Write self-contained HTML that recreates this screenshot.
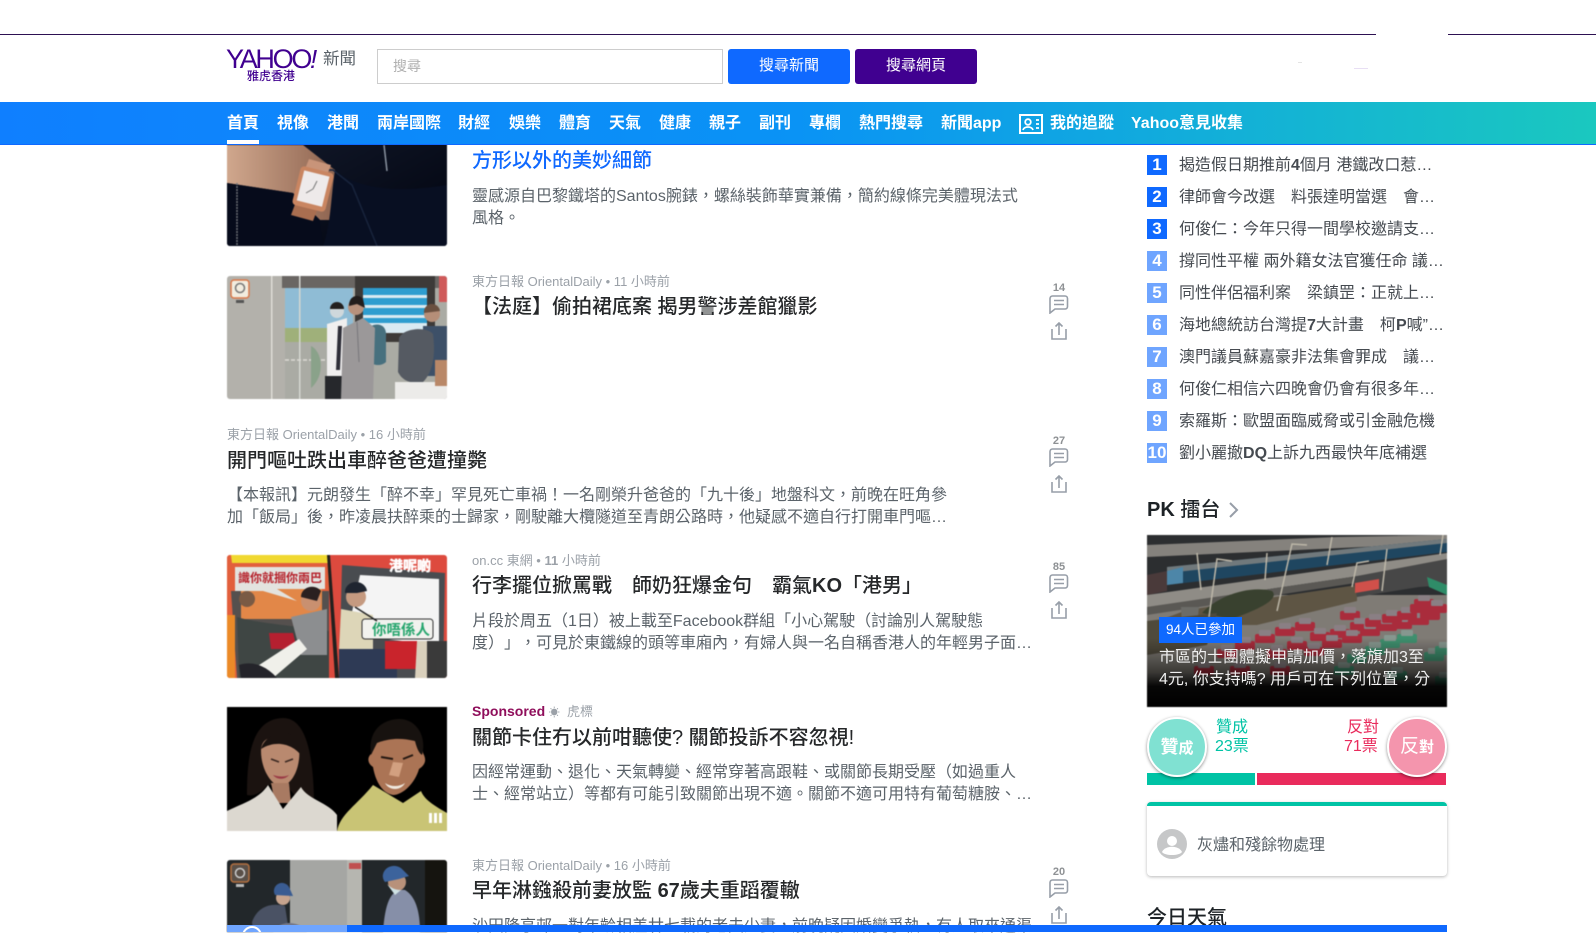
<!DOCTYPE html>
<html lang="zh-Hant"><head><meta charset="utf-8"><title>Yahoo 新聞</title>
<style>
html,body{margin:0;padding:0;background:#fff}
body{width:1596px;height:932px;position:relative;overflow:hidden;font-family:"Liberation Sans","Noto Sans CJK TC",sans-serif;color:#26282a;text-spacing-trim:space-all}
.a{position:absolute;white-space:nowrap}
.m{font-size:13px;line-height:18px;color:#9ba1a8}
.h{font-size:20px;line-height:28px;color:#26282a;font-weight:500}
.h b{font-weight:700}
.d{font-size:16px;line-height:22px;color:#5b636a;font-weight:400}
.n{position:absolute;top:110px;font-size:16px;line-height:28px;color:#fff;font-weight:700;white-space:nowrap}
.r{position:absolute;left:1147px;width:20px;height:20px;background:#6fa5ff;color:#fff;text-align:center;font-size:17px;line-height:20px;font-weight:700}
.r.t{background:#0f69ff}
.rt{position:absolute;left:1179px;font-size:16px;line-height:22px;color:#454a50;white-space:nowrap;font-weight:400}
.rt b{font-weight:700}
.c{position:absolute;width:24px;text-align:center;font-size:11px;font-weight:700;color:#8e9194;line-height:12px}
svg{position:absolute;display:block}
svg.im{filter:blur(.5px)}
</style></head><body>

<!-- story images -->
<svg class="im" style="left:227px;top:125px;border-radius:3px" width="220" height="121" viewBox="0 0 220 121">
<defs><linearGradient id="wg" x1="0" y1="0" x2="1" y2="1"><stop offset="0" stop-color="#151c2e"/><stop offset="1" stop-color="#01040f"/></linearGradient>
<linearGradient id="sk" x1="0" y1="0" x2="1" y2="0"><stop offset="0" stop-color="#d0a78d"/><stop offset="1" stop-color="#8e6450"/></linearGradient></defs>
<rect width="220" height="121" fill="url(#wg)"/>
<path d="M0 20H76L108 45L106 95H93L66 68L0 58Z" fill="url(#sk)"/>
<path d="M108 45C125 60 160 70 220 60V121H96C104 100 104 70 108 45Z" fill="#080f22"/>
<path d="M100 45H106L125 60L150 121" stroke="#18243c" stroke-width="1.500" fill="none"/>
<path d="M0 58L66 68L93 95L96 121H0Z" fill="#060b1b"/>
<path d="M10 58V121" stroke="#6f7379" stroke-width="1.500" stroke-dasharray="2 1"/>
<path d="M157 20L160 46" stroke="#8a93a0" stroke-width="1.500"/>
<path d="M82 34L104 40L96 60L74 54Z" fill="#c89479"/>
<path d="M70 74L92 80L86 96L64 90Z" fill="#a96e50"/>
<rect x="69" y="44" width="34" height="40" rx="4" fill="#c98561" transform="rotate(14 86 64)"/>
<rect x="73" y="48" width="26" height="31" fill="#eeeaea" transform="rotate(14 86 64)"/>
<path d="M86 64L90 56M86 64L79 68" stroke="#777" fill="none"/>
</svg>

<svg class="im" style="left:227px;top:276px;border-radius:3px" width="220" height="123" viewBox="0 0 220 123">
<rect width="220" height="123" fill="#b3b1ab"/>
<rect x="58" width="162" height="123" fill="#aaaba4"/>
<rect x="55" y="0" width="165" height="12" fill="#6a6663"/>
<rect x="128" y="0" width="80" height="66" fill="#3d3a38"/>
<rect x="58" y="12" width="68" height="40" fill="#8fbcd5"/>
<rect x="58" y="52" width="66" height="14" fill="#9fb07a"/>
<g fill="#2e9dcf"><rect x="136" y="12" width="64" height="7"/><rect x="136" y="22" width="64" height="7"/><rect x="136" y="32" width="64" height="7"/><rect x="136" y="42" width="64" height="5"/></g>
<g fill="#d9eaf2"><rect x="136" y="19" width="64" height="3"/><rect x="136" y="29" width="64" height="3"/><rect x="136" y="39" width="64" height="3"/><rect x="136" y="47" width="64" height="10"/></g>
<rect x="212" y="0" width="8" height="26" fill="#cf5a5a"/>
<rect x="44" y="0" width="1.500" height="123" fill="#dedcd6"/>
<rect x="72" y="0" width="1.500" height="123" fill="#d4d6d0"/>
<path d="M58 84H140" stroke="#dcdad4" stroke-dasharray="4 2" stroke-width="1.500"/>
<path d="M84 70C96 76 98 100 84 112Z" fill="#8aa28a"/>
<rect x="4" y="4" width="18" height="18" rx="3" fill="#f2ecdf" stroke="#d9784a" stroke-width="1.500"/>
<circle cx="13" cy="12" r="4.500" fill="none" stroke="#777" stroke-width="1.500"/>
<rect x="9" y="24" width="8" height="3" fill="#555"/>
<path d="M100 48L120 42V95L116 123H100Z" fill="#f0efef"/><path d="M111 50h4l-2 44h-4z" fill="#2e2e38"/>
<path d="M98 100H122V123H98Z" fill="#26282c"/>
<circle cx="110" cy="35" r="7" fill="#cfd8dc"/><path d="M103 33a7 7 0 0 1 14 0z" fill="#23201f"/>
<path d="M144 50C152 46 160 50 159 60V86C152 92 144 88 140 84Z" fill="#47707e"/>
<path d="M116 52L136 42L148 52L146 123H114Z" fill="#9b9899"/>
<path d="M130 46l2 40" stroke="#77767a"/>
<circle cx="129" cy="31" r="8" fill="#b7917c"/><path d="M122 30a8 9 0 0 1 14-7l2 9-8-4z" fill="#221d1c"/>
<circle cx="205" cy="38" r="8" fill="#b58e78"/><path d="M197 37a8 8 0 0 1 16-2z" fill="#6a5040"/>
<rect x="196" y="50" width="24" height="50" fill="#3d5068"/>
<path d="M172 62C176 52 200 50 206 58C208 74 208 94 196 106C186 108 176 106 171 96Z" fill="#555a62"/>
<path d="M168 106H220V123H168Z" fill="#ecebe9"/>
<rect x="208" y="84" width="12" height="26" fill="#b98868"/>
</svg>

<svg class="im" style="left:227px;top:555px;border-radius:3px" width="220" height="123" viewBox="0 0 220 123">
<rect width="220" height="123" fill="#dd4a3e"/>
<rect x="0" width="102" height="123" fill="#e25f3c"/>
<path d="M4 0H103L102 8H5Z" fill="#f0d830"/>
<path d="M4 36H102V123H10Z" fill="#55504e"/>
<path d="M14 34H95V64H14Z" fill="#e28748"/>
<path d="M8 12H98V34H50L70 46L36 36H8Z" fill="#e3e3df"/>
<text x="11" y="27" font-size="12" font-weight="700" fill="#b6232c" style="font-family:'Noto Sans CJK TC',sans-serif">識你就摑你兩巴</text>
<path d="M10 62C30 68 60 70 102 76V123H12Z" fill="#3f4644"/>
<circle cx="84" cy="46" r="10" fill="#c99070"/><path d="M74 42a11 10 0 0 1 20-6L90 46Z" fill="#2a2020"/>
<path d="M64 62L100 54V100H74Z" fill="#8c8e90"/>
<path d="M42 78H66L70 94H44Z" fill="#b52030"/>
<circle cx="20" cy="44" r="8" fill="#7a5a44"/>
<path d="M26 114L72 84L80 94L46 123Z" fill="#f0f0ea"/>
<path d="M12 110C30 104 44 116 50 123H14Z" fill="#24242a"/>
<rect x="0" y="60" width="8" height="63" fill="#eb8a28"/>
<path d="M100 0H103L112 123H108Z" fill="#23201e"/>
<path d="M115 10L218 18L216 123H112Z" fill="#494c50"/>
<path d="M133 20L212 24V90L120 80Z" fill="#f4f4f4"/>
<circle cx="129" cy="42" r="10" fill="#c59a80"/><path d="M118 38a11 10 0 0 1 22-2L130 38Z" fill="#1f2530"/>
<path d="M114 54L146 60V96H112Z" fill="#ddd6b8"/>
<rect x="135" y="64" width="71" height="20" rx="3" fill="#f2f2ee" stroke="#333"/>
<text x="145" y="80" font-size="14.500" font-weight="700" fill="#27a66e" style="font-family:'Noto Sans CJK TC',sans-serif">你唔係人</text>
<path d="M128 52L150 66" stroke="#222" stroke-width="1.500"/>
<path d="M112 94H170V123H112Z" fill="#2e3a55"/>
<rect x="158" y="86" width="38" height="28" fill="#c9242c"/>
<path d="M190 86H200L204 123H188Z" fill="#d9d0bc"/>
<rect x="200" y="86" width="20" height="37" fill="#3a3a3a"/>
<text x="162" y="16" font-size="14" font-weight="900" fill="#fff" stroke="#fff" stroke-width=".3" style="font-family:'Noto Sans CJK TC',sans-serif">港呢啲</text>
</svg>

<svg class="im" style="left:227px;top:707px;" width="220" height="124" viewBox="0 0 220 124">
<rect width="220" height="124" fill="#000"/>
<path d="M20 88C20 50 24 12 56 11C80 11 86 50 87 92C76 98 66 88 60 78H40C36 84 28 90 20 88Z" fill="#1b1310"/>
<path d="M34 44C34 28 50 26 72 40C74 56 68 76 54 80C44 78 34 62 34 44Z" fill="#b9896f"/>
<path d="M34 42C38 28 52 26 60 26C70 30 74 36 74 48C66 38 50 32 34 42Z" fill="#1b1310"/>
<path d="M44 52L52 55M58 55L66 52" stroke="#3a2822" stroke-width="1.500"/>
<path d="M46 68C52 70 58 70 62 68C58 73 50 73 46 68Z" fill="#9a3b46"/>
<path d="M44 76L62 76L64 96L48 96Z" fill="#a87a62"/>
<path d="M0 125V104C16 96 32 92 41 78L56 102L74 80C80 92 102 96 110 108V125Z" fill="#dcd8d0"/>
<path d="M110 125C112 108 130 98 146 78L176 96L194 84C198 94 210 100 220 106V125Z" fill="#c9c475"/>
<path d="M145 46C145 24 194 24 196 46C198 50 201 56 192 62C188 76 176 88 166 88C154 86 148 72 146 60C140 56 140 50 145 46Z" fill="#ab7455"/>
<path d="M144 48C140 18 162 12 172 12C190 12 200 30 195 48C192 46 190 42 188 34C172 30 160 32 150 36Z" fill="#17120f"/>
<path d="M154 50L166 52M176 52L186 48" stroke="#241812" stroke-width="2"/>
<path d="M158 76C164 80 172 80 178 76C174 84 162 84 158 76Z" fill="#efe8de"/>
<path d="M166 55L162 68L172 70L176 56Z" fill="#d2a080"/>
<g fill="#fff"><rect x="202" y="106" width="3" height="10"/><rect x="207" y="106" width="3" height="10"/><rect x="212" y="106" width="3" height="10"/></g>
</svg>

<svg class="im" style="left:227px;top:860px;border-radius:3px 3px 0 0" width="220" height="72" viewBox="0 0 220 72">
<rect width="220" height="72" fill="#22272a"/>
<rect x="63" width="57" height="72" fill="#a5a6a3"/>
<rect x="120" width="15" height="72" fill="#b6b6b0"/>
<rect x="122" y="3" width="12" height="6" fill="#c05050"/>
<rect x="4" y="4" width="18" height="18" rx="3" fill="#5a5048" stroke="#b37040" stroke-width="1.500"/>
<circle cx="13" cy="13" r="4.500" fill="none" stroke="#ccc" stroke-width="1.500"/>
<rect x="9" y="24" width="8" height="3" fill="#bbb"/>
<circle cx="56" cy="38" r="7" fill="#c7a48e"/><path d="M48 35a8 8 0 0 1 14-8l4 9Z" fill="#3a5c92"/>
<path d="M25 62C30 48 42 42 58 46L62 72H26Z" fill="#4a5264"/>
<path d="M46 72C52 60 72 60 80 72Z" fill="#74788a"/>
<path d="M156 72C158 42 164 28 178 30C188 36 193 50 193 72Z" fill="#868fa8"/>
<circle cx="170" cy="22" r="9" fill="#b8917a"/><path d="M158 22a10 9 0 0 1 18-12l6 6-10 3Z" fill="#3c639c"/>
<path d="M160 24C164 28 168 30 174 30L168 35Z" fill="#cfe2e4"/>
<rect x="198" y="0" width="22" height="72" fill="#15140f"/>
</svg>

<!-- main column text -->
<div class="a h" style="left:472px;top:147px;color:#0f69ff">方形以外的美妙細節</div>
<div class="a d" style="left:472px;top:186px">靈感源自巴黎鐵塔的Santos腕錶，螺絲裝飾華實兼備，簡約線條完美體現法式</div>
<div class="a d" style="left:472px;top:208px">風格。</div>

<div class="a m" style="left:472px;top:273px">東方日報 OrientalDaily • 11 小時前</div>
<div class="a h" style="left:472px;top:293px">【法庭】偷拍裙底案 揭男警涉差館獵影</div>

<div class="a m" style="left:227px;top:426px">東方日報 OrientalDaily • 16 小時前</div>
<div class="a h" style="left:227px;top:447px">開門嘔吐跌出車醉爸爸遭撞斃</div>
<div class="a d" style="left:227px;top:485px">【本報訊】元朗發生「醉不幸」罕見死亡車禍！一名剛榮升爸爸的「九十後」地盤科文，前晚在旺角參</div>
<div class="a d" style="left:227px;top:507px">加「飯局」後，昨凌晨扶醉乘的士歸家，剛駛離大欖隧道至青朗公路時，他疑感不適自行打開車門嘔…</div>

<div class="a m" style="left:472px;top:552px">on.cc 東網 • <b>11</b> 小時前</div>
<div class="a h" style="left:472px;top:572px">行李擺位掀罵戰　師奶狂爆金句　霸氣<b>KO</b>「港男」</div>
<div class="a d" style="left:472px;top:611px">片段於周五（1日）被上載至Facebook群組「小心駕駛（討論別人駕駛態</div>
<div class="a d" style="left:472px;top:633px">度）」，可見於東鐵線的頭等車廂內，有婦人與一名自稱香港人的年輕男子面…</div>

<div class="a m" style="left:472px;top:702px"><b style="color:#8f0e5b;font-size:14px">Sponsored</b> <span style="font-size:11px">☀</span> &nbsp;虎標</div>
<div class="a h" style="left:472px;top:724px">關節卡住冇以前咁聽使? 關節投訴不容忽視!</div>
<div class="a d" style="left:472px;top:762px">因經常運動、退化、天氣轉變、經常穿著高跟鞋、或關節長期受壓（如過重人</div>
<div class="a d" style="left:472px;top:784px">士、經常站立）等都有可能引致關節出現不適。關節不適可用特有葡萄糖胺、…</div>

<div class="a m" style="left:472px;top:857px">東方日報 OrientalDaily • 16 小時前</div>
<div class="a h" style="left:472px;top:877px">早年淋鏹殺前妻放監 <b>67</b>歲夫重蹈覆轍</div>
<div class="a d" style="left:472px;top:916px">沙田隆亨邨一對年齡相差廿七載的老夫少妻，前晚疑因婚變爭執，有人取來通渠</div>

<!-- comment / share icons -->
<svg width="0" height="0" style="position:absolute"><defs>
<g id="ci" fill="none" stroke="#979ea8" stroke-width="1.600"><path d="M3.500 1H16a2.500 2.500 0 0 1 2.500 2.500v8a2.500 2.500 0 0 1-2.500 2.500H6L1 18V3.500A2.500 2.500 0 0 1 3.500 1Z"/><path d="M5 5.500H15M5 9.500H15"/></g>
<g id="si" fill="none" stroke="#979ea8" stroke-width="1.600"><path d="M1 7V17H15V7"/><path d="M8 13V1M4.500 4.500L8 1l3.500 3.500"/></g>
</defs></svg>
<div class="c" style="left:1047px;top:282px">14</div>
<svg style="left:1049px;top:295px" width="20" height="19"><use href="#ci"/></svg>
<svg style="left:1051px;top:322px" width="16" height="18"><use href="#si"/></svg>
<div class="c" style="left:1047px;top:435px">27</div>
<svg style="left:1049px;top:448px" width="20" height="19"><use href="#ci"/></svg>
<svg style="left:1051px;top:475px" width="16" height="18"><use href="#si"/></svg>
<div class="c" style="left:1047px;top:561px">85</div>
<svg style="left:1049px;top:574px" width="20" height="19"><use href="#ci"/></svg>
<svg style="left:1051px;top:601px" width="16" height="18"><use href="#si"/></svg>
<div class="c" style="left:1047px;top:866px">20</div>
<svg style="left:1049px;top:879px" width="20" height="19"><use href="#ci"/></svg>
<svg style="left:1051px;top:906px" width="16" height="18"><use href="#si"/></svg>

<!-- right rail list -->
<div class="r t" style="top:155px">1</div><div class="rt" style="top:155px">揭造假日期推前<b>4</b>個月 港鐵改口惹…</div>
<div class="r t" style="top:187px">2</div><div class="rt" style="top:187px">律師會今改選　料張達明當選　會…</div>
<div class="r t" style="top:219px">3</div><div class="rt" style="top:219px">何俊仁：今年只得一間學校邀請支…</div>
<div class="r" style="top:251px">4</div><div class="rt" style="top:251px">撐同性平權 兩外籍女法官獲任命 議…</div>
<div class="r" style="top:283px">5</div><div class="rt" style="top:283px">同性伴侶福利案　梁鎮罡：正就上…</div>
<div class="r" style="top:315px">6</div><div class="rt" style="top:315px">海地總統訪台灣提<b>7</b>大計畫　柯<b>P</b>喊”…</div>
<div class="r" style="top:347px">7</div><div class="rt" style="top:347px">澳門議員蘇嘉豪非法集會罪成　議…</div>
<div class="r" style="top:379px">8</div><div class="rt" style="top:379px">何俊仁相信六四晚會仍會有很多年…</div>
<div class="r" style="top:411px">9</div><div class="rt" style="top:411px">索羅斯：歐盟面臨威脅或引金融危機</div>
<div class="r" style="top:443px">10</div><div class="rt" style="top:443px">劉小麗撤<b>DQ</b>上訴九西最快年底補選</div>

<div class="a" style="left:1147px;top:495px;font-size:20px;line-height:30px;color:#1d2226;font-weight:500"><b>PK</b> 擂台</div>
<svg style="left:1228px;top:501px" width="12" height="18"><path d="M2 2L9 9L2 16" fill="none" stroke="#979ea8" stroke-width="2"/></svg>

<!-- PK image -->
<svg class="im" style="left:1147px;top:535px" width="300" height="172" viewBox="0 0 300 172">
<defs><linearGradient id="pg" x1="0" y1="0" x2="0" y2="1"><stop offset=".6" stop-color="#000" stop-opacity="0"/><stop offset=".8" stop-color="#000" stop-opacity=".55"/><stop offset=".88" stop-color="#000" stop-opacity=".95"/><stop offset="1" stop-color="#000"/></linearGradient>
<g id="tr"><rect x="0" y="4" width="20" height="9" rx="2" fill="#a92c3c"/><rect x="4" y="0" width="12" height="6" rx="1" fill="#8a7f84"/></g>
<g id="tg"><rect x="0" y="4" width="20" height="9" rx="2" fill="#3f8f6e"/><rect x="4" y="0" width="12" height="6" rx="1" fill="#86978f"/></g></defs>
<rect width="300" height="172" fill="#7f7b75"/>
<rect width="300" height="60" fill="#2c2e30"/>
<path d="M0 10L190 2L300 0V8L0 22Z" fill="#85827d"/>
<path d="M0 40L20 36V56L0 60Z" fill="#4a3a3a"/>
<path d="M20 32L300 4V17L20 50Z" fill="#1f4660"/><path d="M20 32L300 4V8L20 38Z" fill="#71797c"/>
<path d="M20 36L36 32V48L20 50Z" fill="#4d86a8"/>
<path d="M0 60L300 18V28L0 72Z" fill="#8f8c86"/>
<path d="M0 72L300 28V34L0 80Z" fill="#5a5854"/>
<path d="M40 75L210 50V66L110 90H0Z" fill="#5e5544"/>
<path d="M55 78C70 62 100 50 125 56C135 66 100 78 85 84Z" fill="#39412f"/>
<path d="M34 72H52L48 110H36Z" fill="#6c6c68"/>
<path d="M0 86L70 78L60 110L0 120Z" fill="#4f4a3c"/>
<path d="M205 42L300 24V50L272 52L210 62Z" fill="#474747"/>
<path d="M208 48L232 44V54L208 58Z" fill="#d0504a"/>
<path d="M280 42L300 50V60L282 52Z" fill="#2f8c68"/>
<g stroke="#bdb7a8" stroke-width="1.500" fill="none"><path d="M62 82L70 24L85 26M130 76L145 9L160 10M180 30L185 2M205 52L210 28L222 26M235 56L240 14M50 18L54 55M120 18L118 45M293 20L296 0"/></g>
<use href="#tr" x="193" y="72"/><use href="#tr" x="148" y="83"/><use href="#tr" x="128" y="88"/><use href="#tr" x="108" y="95"/><use href="#tr" x="88" y="102"/><use href="#tr" x="140" y="102"/><use href="#tr" x="163" y="93"/><use href="#tr" x="183" y="90"/><use href="#tr" x="203" y="83"/><use href="#tr" x="213" y="88"/><use href="#tr" x="218" y="79"/><use href="#tr" x="230" y="83"/><use href="#tr" x="245" y="81"/><use href="#tr" x="262" y="77"/><use href="#tr" x="235" y="75"/><use href="#tr" x="250" y="72"/><use href="#tr" x="273" y="72"/><use href="#tr" x="263" y="65"/><use href="#tr" x="267" y="60"/><use href="#tr" x="280" y="65"/><use href="#tr" x="175" y="100"/><use href="#tr" x="195" y="95"/>
<use href="#tr" x="70" y="110"/><use href="#tr" x="120" y="110"/><use href="#tr" x="157" y="108"/><use href="#tr" x="47" y="127"/><use href="#tr" x="83" y="127"/><use href="#tr" x="123" y="127"/>
<use href="#tg" x="250" y="95"/><use href="#tg" x="233" y="100"/><use href="#tg" x="218" y="107"/><use href="#tg" x="277" y="113"/><use href="#tg" x="288" y="107"/><use href="#tg" x="240" y="132"/><use href="#tg" x="288" y="137"/><use href="#tg" x="187" y="127"/><use href="#tg" x="200" y="115"/>
<rect width="300" height="172" fill="url(#pg)"/>
</svg>
<div class="a" style="left:1159px;top:617px;width:83px;height:26px;background:#0f69ff;color:#fff;font-size:13.500px;line-height:26px;text-align:center">94人已參加</div>
<div class="a" style="left:1159px;top:647px;font-size:16px;line-height:22px;color:#f0f0f0">市區的士團體擬申請加價，落旗加3至</div>
<div class="a" style="left:1159px;top:669px;font-size:16px;line-height:22px;color:#f0f0f0">4元, 你支持嗎? 用戶可在下列位置，分</div>

<!-- votes -->
<div class="a" style="left:1147px;top:773px;width:108px;height:12px;background:#00c3a5"></div>
<div class="a" style="left:1257px;top:773px;width:189px;height:12px;background:#e92b5c"></div>
<div class="a" style="left:1147px;top:717px;width:56px;height:56px;border:2px solid #fff;border-radius:50%;background:#80e1d2;box-shadow:0 1px 3px rgba(0,0,0,.45);color:#fff;text-align:center;line-height:56px;font-size:15px;font-weight:700;z-index:2"><span style="font-size:18px">贊</span>成</div>
<div class="a" style="left:1387px;top:717px;width:56px;height:56px;border:2px solid #fff;border-radius:50%;background:#f495ad;box-shadow:0 1px 3px rgba(0,0,0,.45);color:#fff;text-align:center;line-height:56px;font-size:15px;font-weight:700;z-index:2"><span style="font-size:19px;font-weight:400">反</span>對</div>
<div class="a" style="left:1216px;top:718px;font-size:16px;line-height:20px;color:#00c3a5;font-weight:400">贊成</div>
<div class="a" style="left:1215px;top:737px;font-size:16px;line-height:20px;color:#00c3a5;font-weight:400">23票</div>
<div class="a" style="left:1347px;top:718px;font-size:16px;line-height:20px;color:#e92b5c;font-weight:400">反對</div>
<div class="a" style="left:1344px;top:737px;font-size:16px;line-height:20px;color:#e92b5c;font-weight:400">71票</div>

<!-- comment card -->
<div class="a" style="left:1147px;top:802px;width:300px;height:70px;border-top:4px solid #00c3a5;border-radius:4px;background:#fff;box-shadow:0 1px 3px rgba(0,0,0,.28)"></div>
<svg style="left:1157px;top:829px" width="30" height="30" viewBox="0 0 30 30"><circle cx="15" cy="15" r="15" fill="#c6c7c8"/><circle cx="15" cy="12" r="5" fill="#fff"/><path d="M5 23C8 16 22 16 25 23C22 27 8 27 5 23Z" fill="#fff"/></svg>
<div class="a" style="left:1197px;top:835px;font-size:16px;line-height:22px;color:#5b636a;font-weight:400">灰燼和殘餘物處理</div>

<div class="a" style="left:1147px;top:903px;font-size:20px;line-height:30px;color:#1d2226;font-weight:500">今日天氣</div>

<!-- bottom bar -->
<div class="a" style="left:227px;top:925px;width:120px;height:7px;background:#6fa5ff;overflow:hidden;z-index:5"><div style="position:absolute;left:15px;top:1px;width:16px;height:16px;border:2px solid #fff;border-radius:50%"></div></div>
<div class="a" style="left:347px;top:925px;width:1100px;height:7px;background:#0f69ff;z-index:5"></div>

<!-- header -->
<div class="a" style="left:0;top:0;width:1596px;height:102px;background:#fff;z-index:8"></div>
<div class="a" style="left:0;top:34px;width:1376px;height:1px;background:#2d1152;z-index:9"></div>
<div class="a" style="left:1448px;top:34px;width:148px;height:1px;background:#2d1152;z-index:9"></div>
<div style="position:absolute;left:0;top:0;z-index:10">
<div class="a" style="left:226px;top:44px;font-size:27px;line-height:30px;color:#400090;letter-spacing:-2.300px;font-weight:400">YAHOO<i style="font-size:26px;letter-spacing:0">!</i></div>
<div class="a" style="left:247px;top:68px;font-size:12px;line-height:16px;color:#400090;font-weight:500">雅虎香港</div>
<div class="a" style="left:323px;top:47px;font-size:16.500px;line-height:24px;color:#5b636a">新聞</div>
<div class="a" style="left:377px;top:49px;width:346px;height:35px;box-sizing:border-box;border:1.500px solid #cdcdcd;background:#fff"></div>
<div class="a" style="left:393px;top:55px;font-size:14px;line-height:22px;color:#b0b0b0">搜尋</div>
<div class="a" style="left:728px;top:49px;width:122px;height:35px;background:#0f69ff;border-radius:3px;color:#fff;text-align:center;font-size:15px;line-height:33px">搜尋新聞</div>
<div class="a" style="left:855px;top:49px;width:122px;height:35px;background:#400090;border-radius:3px;color:#fff;text-align:center;font-size:15px;line-height:33px">搜尋網頁</div>
<div class="a" style="left:1298px;top:62px;width:4px;height:1px;background:#e4e4e4"></div>
<div class="a" style="left:1354px;top:68px;width:14px;height:1px;background:#e8dff4"></div>
</div>

<!-- nav -->
<div class="a" style="left:0;top:102px;width:1596px;height:43px;box-sizing:border-box;background:linear-gradient(90deg,#0f7fff 0%,#0a93f5 50%,#1ac8bf 100%);border-bottom:1px solid #0f69ff;z-index:10"></div>
<div style="position:absolute;left:0;top:0;z-index:11">
<div class="n" style="left:227px">首頁</div>
<div class="a" style="left:227px;top:140px;width:32px;height:4px;background:#fff"></div>
<div class="n" style="left:277px">視像</div>
<div class="n" style="left:327px">港聞</div>
<div class="n" style="left:377px">兩岸國際</div>
<div class="n" style="left:458px">財經</div>
<div class="n" style="left:509px">娛樂</div>
<div class="n" style="left:559px">體育</div>
<div class="n" style="left:609px">天氣</div>
<div class="n" style="left:659px">健康</div>
<div class="n" style="left:709px">親子</div>
<div class="n" style="left:759px">副刊</div>
<div class="n" style="left:809px">專欄</div>
<div class="n" style="left:859px">熱門搜尋</div>
<div class="n" style="left:941px">新聞app</div>
<svg style="left:1019px;top:114px" width="24" height="20" viewBox="0 0 24 20"><rect x="1" y="1" width="22" height="18" fill="none" stroke="#fff" stroke-width="2"/><circle cx="9" cy="8" r="2.800" fill="none" stroke="#fff" stroke-width="1.800"/><path d="M4 16C5 12 13 12 14 16" fill="none" stroke="#fff" stroke-width="1.800"/><path d="M17 6h3M17 10h3M17 14h3" stroke="#fff" stroke-width="1.800"/></svg>
<div class="n" style="left:1050px">我的追蹤</div>
<div class="n" style="left:1131px">Yahoo意見收集</div>
</div>
</body></html>
